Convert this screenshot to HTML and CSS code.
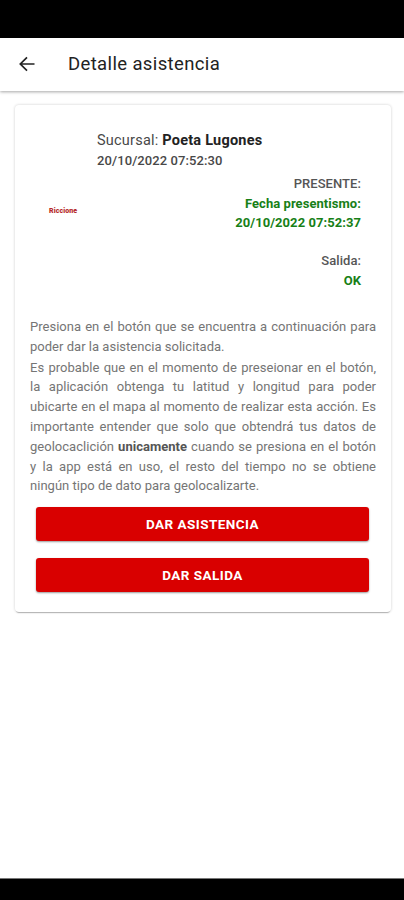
FILE: index.html
```html
<!DOCTYPE html>
<html lang="es">
<head>
  <meta charset="UTF-8">
  <meta name="viewport" content="width=device-width, initial-scale=1">
  <title>Detalle asistencia</title>
  <link rel="stylesheet" href="styles.css">
</head>
<body>
<div class="app">
  <div class="status-bar"></div>
  <header class="toolbar">
    <svg class="back-icon" viewBox="0 0 16 16">
      <path d="M15.5 8H1.5M8 1.3L1.3 8L8 14.7"></path>
    </svg>
    <h1 class="title">Detalle asistencia</h1>
  </header>
  <main class="content">
    <div class="card">
      <div class="item">
        <div class="logo">Riccione</div>
        <div class="info">
          <div class="branch">Sucursal: <b>Poeta Lugones</b></div>
          <div class="date">20/10/2022 07:52:30</div>
          <div class="state">
            <p>PRESENTE:</p>
            <p class="green">Fecha presentismo:</p>
            <p class="green date-in">20/10/2022 07:52:37</p>
            <p class="exit">Salida:</p>
            <p class="green">OK</p>
          </div>
        </div>
      </div>
      <div class="description">
        <p>Presiona en el botón que se encuentra a continuación para poder dar la asistencia solicitada.</p>
        <p>Es probable que en el momento de preseionar en el botón, la aplicación obtenga tu latitud y longitud para poder ubicarte en el mapa al momento de realizar esta acción. Es importante entender que solo que obtendrá tus datos de geolocaclición <b>unicamente</b> cuando se presiona en el botón y la app está en uso, el resto del tiempo no se obtiene ningún tipo de dato para geolocalizarte.</p>
      </div>
      <div class="buttons">
        <button class="button">DAR ASISTENCIA</button>
        <button class="button">DAR SALIDA</button>
      </div>
    </div>
  </main>
  <div class="nav-bar"></div>
</div>
</body>
</html>
```

FILE: styles.css
```css
* {
  box-sizing: border-box;
}
body {
  margin: 0;
  background: #fff;
  font-family: Roboto, "Liberation Sans", sans-serif;
}
p, h1 {
  margin: 0;
}
.app {
  display: flex;
  flex-direction: column;
  height: 900px;
  overflow: hidden;
}
.status-bar {
  height: 38px;
  background: #000;
}
.toolbar {
  display: flex;
  align-items: center;
  height: 53px;
  padding: 0 19px 2px;
  box-shadow: 0 1px 3px rgba(0, 0, 0, 0.35);
}
.back-icon {
  width: 16px;
  height: 16px;
  margin-top: 1px;
  fill: none;
  stroke: #222;
  stroke-width: 1.7;
}
.title {
  margin-left: 33px;
  font-size: 18.5px;
  font-weight: 400;
  letter-spacing: 0.37px;
  color: #222;
}
.content {
  flex: 1;
  padding: 14px 13px 0 15px;
}
.card {
  height: 507px;
  padding: 26px 15px 0;
  border-radius: 4px;
  box-shadow: 0 2px 1px -1px rgba(0, 0, 0, 0.25), 0 0 3px rgba(0, 0, 0, 0.2);
}
.item {
  display: flex;
  align-items: center;
  height: 159px;
}
.logo {
  width: 67px;
  padding-left: 19px;
  font-size: 7px;
  font-weight: 900;
  letter-spacing: 0.1px;
  color: #b52828;
}
.info {
  flex: 1;
  align-self: flex-start;
  font-size: 13px;
  line-height: 20px;
  color: #484848;
}
.branch {
  font-size: 14.5px;
  letter-spacing: 0.22px;
}
.branch b {
  font-weight: 700;
  color: #222;
}
.date {
  font-weight: 500;
  letter-spacing: 0.1px;
}
.state {
  padding: 3px 15px 0 0;
  text-align: right;
  font-weight: 500;
  letter-spacing: 0.06px;
  color: #555;
}
.state .green {
  font-weight: 700;
  color: #178017;
}
.state .date-in {
  line-height: 18px;
}
.exit {
  margin-top: 19px;
}
.description {
  margin-top: 27px;
  font-size: 13px;
  line-height: 19.8px;
  letter-spacing: 0.02px;
  text-align: justify;
  color: #757575;
}
.description p + p {
  margin-top: 1px;
}
.description b {
  color: #555;
}
.buttons {
  display: flex;
  flex-direction: column;
  gap: 17px;
  padding: 10.4px 7px 0 6px;
}
.button {
  height: 34px;
  padding: 0;
  border: 0;
  border-radius: 3px;
  background: #d90000;
  box-shadow: 0 1px 2px rgba(0, 0, 0, 0.4);
  font-family: inherit;
  font-size: 13.5px;
  font-weight: 700;
  letter-spacing: 0.45px;
  color: #fff;
}
.nav-bar {
  height: 22px;
  background: #000;
  border-top: 1px solid #777;
}
```
